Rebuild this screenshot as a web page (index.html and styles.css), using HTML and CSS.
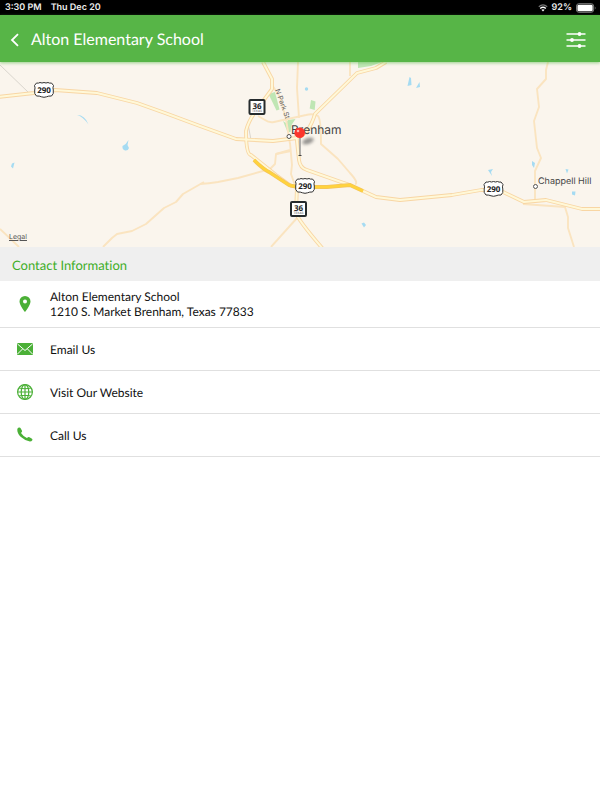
FILE: index.html
```html
<!DOCTYPE html>
<html lang="en">
<head>
  <meta charset="UTF-8">
  <meta name="viewport" content="width=device-width, initial-scale=1">
  <title>Alton Elementary School</title>
  <link rel="stylesheet" href="styles.css">
</head>
<body>

<div class="status-bar">
  <span class="status-time">3:30 PM</span>
  <span>Thu Dec 20</span>
  <span class="status-right">
    <svg class="wifi" viewBox="0 0 10 8" aria-hidden="true">
      <path d="M0.8 2.8Q5-1 9.2 2.8" fill="none" stroke="#777" stroke-width="1.2"/>
      <path d="M2.2 4.5Q5 2 7.8 4.5" fill="none" stroke="#fff" stroke-width="1.4"/>
      <path d="M3.4 5.8Q5 4.6 6.6 5.8L5 7.6z" fill="#fff"/>
    </svg>
    <span>92%</span>
    <svg class="battery" viewBox="0 0 21 10" aria-hidden="true">
      <rect x="0.5" y="0.5" width="18" height="9" rx="2.5" fill="none" stroke="#888"/>
      <rect x="1.5" y="1.5" width="16" height="7" rx="1.5" fill="#fff"/>
      <path d="M19.8 3.5Q21.2 5 19.8 6.5z" fill="#888"/>
    </svg>
  </span>
</div>

<header class="header">
  <button class="btn-back" aria-label="Back">
    <svg viewBox="0 0 10 14"><path d="M8 1.2L2 7l6 5.8" fill="none" stroke="#fff" stroke-width="1.8"/></svg>
  </button>
  <h1>Alton Elementary School</h1>
  <button class="btn-filter" aria-label="Options">
    <svg viewBox="0 0 20 16">
      <path d="M0.5 2h19M0.5 8h19M0.5 14h19" stroke="#fff" stroke-width="1.4"/>
      <circle cx="13.5" cy="2" r="1.9" fill="#fff"/>
      <circle cx="6" cy="8" r="1.9" fill="#fff"/>
      <circle cx="13.5" cy="14" r="1.9" fill="#fff"/>
    </svg>
  </button>
</header>

<main>
  <div class="map">
    <svg class="map-canvas" viewBox="0 62 600 185" preserveAspectRatio="xMidYMid slice" role="img" aria-label="Map of Brenham">
      <defs>
        <filter id="soft" x="-50%" y="-50%" width="200%" height="200%"><feGaussianBlur stdDeviation="1.5"/></filter>
        <g id="us-shield">
          <path d="M-7.500-7q2 .5 3.500-.5Q-2-6.500 0-7.500 2-6.500 4-7.500q1.500 1 3.500.5L9.500-4.500Q8.500-2 9.300 0q.8 4-1.800 6Q4.500 5.800 2.500 6.800L0 7.300-2.500 6.800Q-4.500 5.800-7.500 6-10.100 4-9.300 0-8.500-2-9.500-4.500z" fill="#fff" stroke="#333" stroke-linejoin="round"/>
          <text class="shield-text" y="3">290</text>
        </g>
        <g id="tx-shield">
          <rect x="-7.500" y="-7" width="15" height="14" rx="1" fill="#fff" stroke="#252b2d" stroke-width="2"/>
          <text class="shield-text" y="2">36</text>
          <text class="shield-state" y="5">TEXAS</text>
        </g>
      </defs>

      <!-- parks -->
      <g fill="#bfe6b4">
        <path d="M268.500 94l6.500-2 4.500 17.500-3 1z"/>
        <path d="M283 121l3 2 2-3 7.500-1-4 6-1 7h-3z"/>
        <path d="M311 100l4.500 1.500-.8 8.500-5-1.500z"/>
        <path d="M358 62h24l-11 4-13 2z"/>
      </g>

      <!-- lakes -->
      <g fill="#a5dbf2">
        <path d="M77 115q8 0 11.500 9.500-5-7.500-11.500-9.500z"/>
        <path d="M128.500 140l-1 5 1.500 3q-1 3-4 2.500-3-1-2.500-4.500 4-2 6-6z"/>
        <path d="M12 163.500l2.500-1-1.500 6-2-2z"/>
        <path d="M409.500 77l1.500 1 .5 7-4 1zM419.500 82l.5 5-4 1z"/>
        <circle cx="306.500" cy="89" r="1.700"/>
        <path d="M361.500 223.500l2.500-1 2 2.500-2 2.500z"/>
        <path d="M488 170l5-1-2 3 1 4z"/>
        <path d="M532 161l3 2-1 5-2-3zM565.500 169l3 .5-1.500 4zM572 191.500l3.500 0-.5 4-3-1z"/>
      </g>

      <path d="M0 65l28 27M248 124l3 16" fill="none" stroke="#d9d5cd"/>

      <!-- local roads -->
      <g fill="none" stroke="#fae4c0" stroke-width="1.900" stroke-linejoin="round">
        <path d="M103 247l9-9 5-4 15-3 14-7 18-16 12-6 7-8 21-12"/>
        <path d="M200 184q9-.5 18-2l20-4 32-9 5-5 1-10 15-3"/>
        <path d="M0 229l19 18"/>
        <path d="M298 62l-1 26 2 30"/>
        <path d="M272 85l8 12 6 22 4 25M258 116l7 4q4 3 9 2l32-7q7-2 12 1 3 3 3 28l17 15 12 14q9 10 5 11"/>
        <path d="M290 143l2 22-1 9 5 14M276 154l14-4M350 62v14"/>
        <path d="M297 218l-26 29"/>
        <path d="M548 62l-2 8v9l-9 10 2 18-5 14 3 27 4 10-6 13v30"/>
        <path d="M523 204l42 3 3 10v11l6 19"/>
      </g>

      <!-- highways, casing then fill -->
      <g fill="none" stroke="#f8d6a4" stroke-width="3.800" stroke-linejoin="round">
        <path id="highway-west" d="M-2 97l36-4 21-3 42 3 40 10 28 10 35 13 36 13 37 2 24-3q12-4 18-24l42-41 19-5 10-6"/>
        <path id="highway-36" d="M263 62l9 17v10l-17 23q-7 10-9 19 0 24 5 24l25 20 15 11h6l-1 27q2 7 27 36"/>
        <path id="highway-east" d="M363 191l13 6 24 3 52-5 29-5h18l25 12 22-2 20 5 16 4h19"/>
        <path id="market-street" d="M296 132l3 28q1 8 8 10l34 12 9 3"/>
      </g>
      <g fill="none" stroke="#fff8d8" stroke-width="2" stroke-linejoin="round">
        <use href="#highway-west"/>
        <use href="#highway-36"/>
        <use href="#highway-east"/>
        <use href="#market-street"/>
      </g>
      <path d="M254 160q9 9 15 12l20 13 8 2h30l23-2 13 6" fill="none" stroke="#f3c35c" stroke-width="3.800"/>
      <path d="M254 160q9 9 15 12l20 13 8 2h30l23-2 13 6" fill="none" stroke="#ffd33d" stroke-width="2.500"/>

      <use href="#us-shield" x="44" y="90"/>
      <use href="#us-shield" x="305" y="186"/>
      <use href="#us-shield" x="493.500" y="189"/>
      <use href="#tx-shield" x="257" y="107"/>
      <use href="#tx-shield" x="298.500" y="209"/>

      <circle cx="289" cy="136.500" r="2" fill="#fff" stroke="#555"/>
      <circle cx="535.500" cy="186.500" r="2" fill="#fff" stroke="#555"/>
      <text class="street" transform="translate(275 90) rotate(70)">N Park St</text>
      <text class="city" x="291" y="134">Brenham</text>
      <text class="town" x="538" y="184">Chappell Hill</text>

      <!-- pin -->
      <ellipse cx="308" cy="141" rx="6" ry="3" transform="rotate(-20 308 141)" fill="#555" opacity=".6" filter="url(#soft)"/>
      <path d="M300 137v18" stroke="#888" stroke-width="1.300"/>
      <path d="M298.500 155.500h3" stroke="#444"/>
      <circle cx="299.700" cy="132.800" r="5.300" fill="#fb352d"/>
      <circle cx="298" cy="131" r="1.300" fill="#ffb7ae"/>
    </svg>
    <a class="legal" href="#legal">Legal</a>
  </div>

  <h2 class="section-title">Contact Information</h2>

  <ul class="contact-list">
    <li>
      <a class="contact-row" href="#map">
        <svg class="icon" viewBox="0 0 18 18" aria-hidden="true">
          <path fill-rule="evenodd" d="M9 1a5.500 5.500 0 0 0-5.500 5.500C3.500 10.500 9 17 9 17s5.500-6.500 5.500-10.500A5.500 5.500 0 0 0 9 1zm0 3.500a2 2 0 1 1 0 4 2 2 0 0 1 0-4z"/>
        </svg>
        <span>Alton Elementary School<br>1210 S. Market Brenham, Texas 77833</span>
      </a>
    </li>
    <li>
      <a class="contact-row" href="#email">
        <svg class="icon" viewBox="0 0 18 18" aria-hidden="true">
          <rect x="1" y="3" width="16" height="12" rx="1"/>
          <path d="M1.500 4L9 10.500 16.500 4M1.500 14l5-5M16.500 14l-5-5" fill="none" stroke="#fff"/>
        </svg>
        <span>Email Us</span>
      </a>
    </li>
    <li>
      <a class="contact-row" href="#website">
        <svg class="icon icon-line" viewBox="0 0 18 18" aria-hidden="true">
          <circle cx="9" cy="9" r="7.400"/>
          <ellipse cx="9" cy="9" rx="3.800" ry="7.400"/>
          <path d="M9 1.500v15M1.500 9h15M3 5q6 1.500 12 0M3 13q6-1.500 12 0"/>
        </svg>
        <span>Visit Our Website</span>
      </a>
    </li>
    <li>
      <a class="contact-row" href="#call">
        <svg class="icon" viewBox="0 0 18 18" aria-hidden="true">
          <path d="M1.300 3.200Q1.600 1.900 3 1.600q1.200-.2 1.800.8l1.200 2.400q.3.900-.4 1.500l-.6.700q2 3.200 5.900 4.900l1.100-.6q.7-.4 1.500 0l2.500 1.400q.8.600.3 1.500-.8 1.200-2.400 1.200Q9 14.800 4.600 10.800 1 7 1.300 3.200z"/>
        </svg>
        <span>Call Us</span>
      </a>
    </li>
  </ul>
</main>

</body>
</html>
```

FILE: styles.css
```css
* { box-sizing: border-box; }
body { margin: 0; background: #fff; color: #111; font-family: Lato, sans-serif; font-variant-ligatures: none; text-rendering: geometricPrecision; }
button { padding: 0; border: none; background: none; cursor: pointer; }
svg { display: block; }

.status-bar { display: flex; align-items: center; height: 15px; padding: 0 4px 0 5px; background: #000; color: #eee; font: 600 9px/15px Inter, sans-serif; }
.status-time { margin-right: 9px; }
.status-right { display: flex; align-items: center; gap: 4px; margin-left: auto; }
.wifi { width: 10px; height: 8px; }
.battery { width: 20px; height: 10px; }

.header { position: relative; z-index: 1; display: flex; align-items: center; height: 47px; padding: 2px 14px 0 10px; background: #57b547; color: #fff; box-shadow: 0 1px 3px rgba(87, 181, 71, 0.6); }
.header h1 { margin: 0 auto 0 11px; font-size: 16px; font-weight: 400; line-height: 20px; }
.btn-back svg { width: 10px; height: 14px; }
.btn-filter svg { width: 20px; height: 16px; }

.map { position: relative; background: #faf5ed; }
.map-canvas { width: 100%; height: 185px; }
.map-canvas text { font-family: Inter, sans-serif; fill: #444; }
.map-canvas .shield-text { font: 700 8px "Open Sans", sans-serif; text-anchor: middle; fill: #222; }
.map-canvas .shield-state { font-size: 3px; text-anchor: middle; }
.map-canvas .street { font-size: 7px; fill: #666; }
.map-canvas .city { font-size: 12px; }
.map-canvas .town { font-size: 9px; }
.legal { position: absolute; left: 9px; bottom: 6px; color: #555; font: 7px/9px Inter, sans-serif; }

.section-title { margin: 0; padding: 9px 12px 7px; background: #efefef; color: #3fae29; font-size: 13px; font-weight: 400; line-height: 18px; }

.contact-list { margin: 0; padding: 0; list-style: none; }
.contact-row { display: flex; align-items: center; gap: 16px; min-height: 43px; padding: 8px 16px; border-bottom: 1px solid #e0e0e0; color: #111; font-size: 12px; line-height: 15px; text-decoration: none; }
.icon { width: 18px; height: 18px; fill: #4bb037; }
.icon-line { fill: none; stroke: #4bb037; stroke-width: 1.2; }
```
